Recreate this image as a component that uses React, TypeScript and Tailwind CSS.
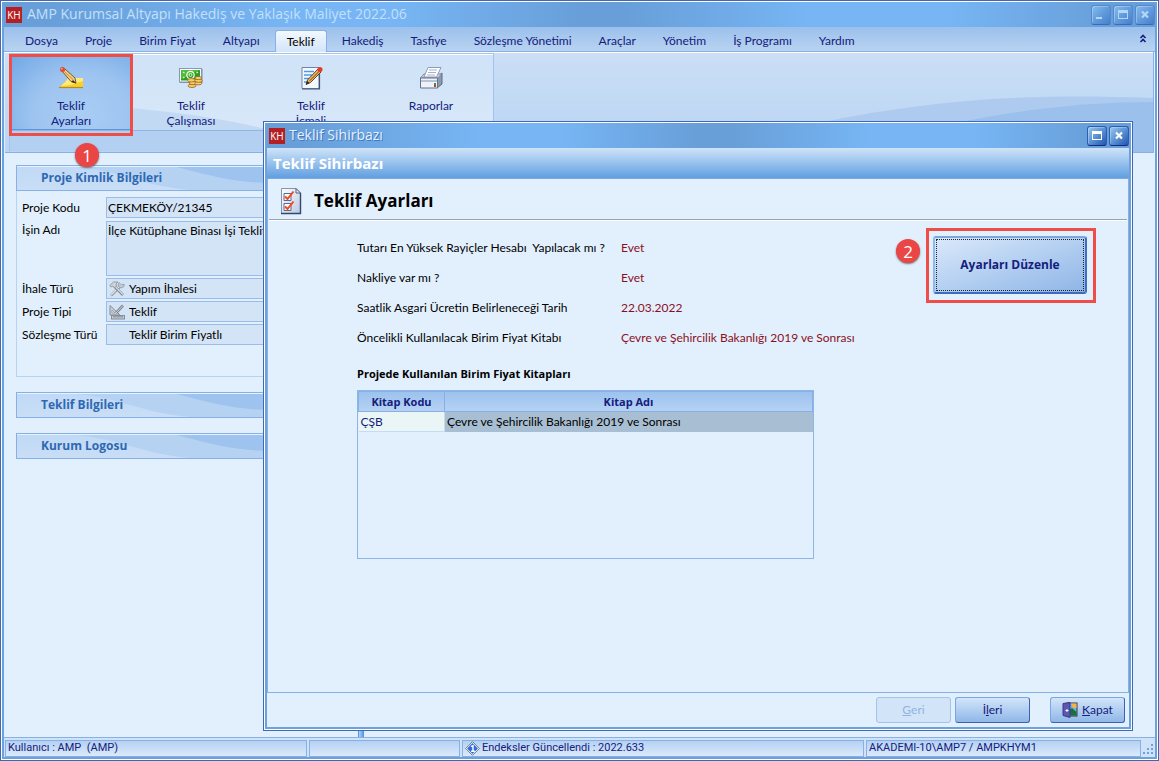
import React from "react";

const menus = ["Dosya", "Proje", "Birim Fiyat", "Altyapı", "Teklif", "Hakediş", "Tasfiye", "Sözleşme Yönetimi", "Araçlar", "Yönetim", "İş Programı", "Yardım"];

const settings = [
  { label: "Tutarı En Yüksek Rayiçler Hesabı  Yapılacak mı ?", value: "Evet" },
  { label: "Nakliye var mı ?", value: "Evet" },
  { label: "Saatlik Asgari Ücretin Belirleneceği Tarih", value: "22.03.2022" },
  { label: "Öncelikli Kullanılacak Birim Fiyat Kitabı", value: "Çevre ve Şehircilik Bakanlığı 2019 ve Sonrası" },
];

function Logo() {
  return (
    <span className="flex h-4 w-4 shrink-0 items-center justify-center bg-[#b51f24] font-['Open_Sans',sans-serif] text-[10px] leading-none text-white">
      KH
    </span>
  );
}

function EditIcon() {
  return (
    <svg width="26" height="24" viewBox="0 0 26 24" aria-hidden="true">
      <path d="M1 22 C4 18 7 17 10 12 H25 V22 Z" fill="#fbd028" />
      <path d="M3 20 C6 17 8 16 10 12 H25 V15 L12 19 Z" fill="#ffea80" />
      <path d="M1 21.500 H25" stroke="#b98a1e" strokeWidth="1.200" />
      <path d="M4 5 L7 3 L17 12 L18 17 L13 15.500 Z" fill="#f6cf85" stroke="#7a5628" strokeWidth="1" />
      <path d="M6.500 5.500 L15.500 14" stroke="#c08a44" strokeWidth="1" />
      <path d="M15 14 L18.500 17.500 L13.500 16 Z" fill="#3b2a1c" />
      <circle cx="4.500" cy="3.500" r="2.500" fill="#e2482d" />
      <circle cx="3.800" cy="2.800" r="0.900" fill="#f9a58c" />
    </svg>
  );
}

function MoneyIcon() {
  return (
    <svg width="24" height="24" viewBox="0 0 24 24" aria-hidden="true">
      <rect x="1" y="3" width="22.500" height="14" fill="#7d8aa3" />
      <rect x="0.500" y="2.500" width="22" height="13.500" fill="#fff" stroke="#8896b4" />
      <rect x="2" y="4" width="19" height="10.500" fill="#2f9c22" />
      <path d="M2 4 H21 L2 13 Z" fill="#4fbd38" />
      <circle cx="11.500" cy="9" r="3.700" fill="none" stroke="#fff" strokeWidth="1.200" />
      <circle cx="11.500" cy="9" r="1.500" fill="none" stroke="#d9f6d1" />
      <path d="M4 6 L5.500 7 M4 12 L5.500 11 M19 6 L17.500 7" stroke="#e2f7dc" strokeWidth="1.300" />
      <g fill="#f8ce69" stroke="#9b6620" strokeWidth="0.800">
        <ellipse cx="13" cy="19.800" rx="4" ry="1.700" />
        <ellipse cx="14" cy="17" rx="4" ry="1.700" />
        <ellipse cx="12.500" cy="14.300" rx="4" ry="1.700" />
        <ellipse cx="19.300" cy="17.200" rx="3.600" ry="1.700" />
        <ellipse cx="19.500" cy="14.600" rx="3.600" ry="1.700" />
        <ellipse cx="19.300" cy="12" rx="3.400" ry="1.600" />
      </g>
    </svg>
  );
}

function NotesIcon() {
  return (
    <svg width="24" height="24" viewBox="0 0 24 24" aria-hidden="true">
      <path d="M3 1.500 H20 V22.500 H3 Z" fill="#f4f8fe" stroke="#7184a3" />
      <path d="M20.500 2 V23 H3" fill="none" stroke="#3e5475" strokeWidth="1.200" />
      <path d="M5 5.500 H15 M5 9 H14 M5 12.500 H11 M5 16 H9" stroke="#4b9be8" strokeWidth="1.300" />
      <path d="M8.500 14 L19 3 L22 6 L11.500 16.500 L7 18.500 Z" fill="#f0be6a" stroke="#5a4024" />
      <path d="M10.500 15 L20 5.500" stroke="#a96c28" strokeWidth="1.300" />
      <path d="M7 18.500 L8.500 15 L10.500 17 Z" fill="#2d2118" />
      <circle cx="21" cy="3.500" r="2.500" fill="#e23b26" />
    </svg>
  );
}

function PrinterIcon() {
  return (
    <svg width="24" height="24" viewBox="0 0 24 24" aria-hidden="true">
      <path d="M18 11 L23 7 V18 L18 22 Z" fill="#8c9ab2" stroke="#5b6984" />
      <path d="M1.500 12 L5 8 H22.500 L19 12 Z" fill="#c9d4e4" stroke="#7f8ca4" />
      <path d="M5 11 L9 1.500 H22 L17.500 11 Z" fill="#fff" stroke="#8f9cb8" />
      <path d="M10 4 H18 M9 6.500 H17 M8 9 H16" stroke="#a3b1cc" />
      <path d="M1.500 12 H18.500 V22 H1.500 Z" fill="#eef3fa" stroke="#65738d" />
      <path d="M2 15 H18" stroke="#8593ac" />
      <rect x="15" y="17" width="2" height="2" fill="#16a43a" />
      <rect x="15" y="19" width="2" height="2" fill="#e03422" />
    </svg>
  );
}

function ChecklistIcon() {
  return (
    <svg width="22" height="28" viewBox="0 0 22 28" aria-hidden="true">
      <defs>
        <linearGradient id="sheet" x1="0" y1="0" x2="1" y2="1">
          <stop offset="0" stopColor="#fff" />
          <stop offset="1" stopColor="#b9c9e2" />
        </linearGradient>
      </defs>
      <path d="M1.500 1.500 H16 L20.500 6 V26.500 H1.500 Z" fill="url(#sheet)" stroke="#8494b2" />
      <path d="M20.500 6 V26.500 H1" fill="none" stroke="#34486e" strokeWidth="1.400" />
      <path d="M16 1.500 V6 H20.500 Z" fill="#e7eefa" stroke="#4c6086" />
      <path d="M4 6.500 H11 V13.500 H4 Z M4 16.500 H11 V23.500 H4 Z" fill="#f7faff" stroke="#566b93" />
      <path d="M5 9.500 L7.500 12 L13.500 4.500 M5 19.500 L7.500 22 L13.500 14.500" fill="none" stroke="#f04a22" strokeWidth="2" />
    </svg>
  );
}

function ToolsIcon() {
  return (
    <svg className="shrink-0" width="16" height="16" viewBox="0 0 16 16" aria-hidden="true">
      <path d="M2 14.500 L11 5.500" stroke="#8d96a2" strokeWidth="2.600" />
      <path d="M2 14 L11 5" stroke="#e3e8ee" strokeWidth="1.200" />
      <path d="M10 1.500 L12.500 4 L15 3 V5.500 L12 7 L9 5 Z" fill="#c6cdd5" stroke="#8d96a2" strokeWidth="0.800" />
      <path d="M5.500 5.500 L14 14" stroke="#7f8994" strokeWidth="2.600" />
      <path d="M6 5.500 L14 13.500" stroke="#d6dce3" strokeWidth="1.100" />
      <path d="M0.800 4.500 L4.500 1 H9 L7 3 L7.500 5 L5.500 7 L4 5 L2 6 Z" fill="#ced5dd" stroke="#8d96a2" strokeWidth="0.900" />
    </svg>
  );
}

function RulerIcon() {
  return (
    <svg className="shrink-0" width="16" height="16" viewBox="0 0 16 16" aria-hidden="true">
      <path d="M1 1.500 L11 11 H1 Z" fill="#c9d0d8" stroke="#858e99" />
      <path d="M3 6 L6 9 H3 Z" fill="#f3f6fa" stroke="#858e99" strokeWidth="0.700" />
      <path d="M7 9 L14 1.500" stroke="#7b8590" strokeWidth="2.600" />
      <path d="M7 9 L14 1.500" stroke="#d9dfe6" strokeWidth="0.900" />
      <rect x="2.500" y="11.500" width="13" height="3.500" fill="#c3cad3" stroke="#858e99" />
      <path d="M5 12 V13.500 M7 12 V13.500 M9 12 V13.500 M11 12 V13.500 M13 12 V13.500" stroke="#6e7884" />
    </svg>
  );
}

function DoorIcon() {
  return (
    <svg width="16" height="16" viewBox="0 0 16 16" aria-hidden="true">
      <rect x="5" y="1" width="10" height="13" fill="#6cb1f0" stroke="#34373f" />
      <path d="M9 1.500 H14.500 V6 H11 Z" fill="#fbb040" />
      <path d="M6 9 L10 6 L14.500 10 V13.500 H6 Z" fill="#1e6e35" />
      <path d="M1 1.500 L8 0.500 V15.500 L1 13.500 Z" fill="#5b57b5" stroke="#3c3888" />
      <path d="M5 7 V10 M3.500 8.500 H6.500" stroke="#fff" />
    </svg>
  );
}

function InfoIcon() {
  return (
    <svg className="shrink-0" width="15" height="15" viewBox="0 0 16 16" aria-hidden="true">
      <path d="M8 0.700 L15.300 8 L8 15.300 L0.700 8 Z" fill="#fff" stroke="#5f6f8e" />
      <path d="M8 2.200 L13.800 8 L8 13.800 L2.200 8 Z" fill="#2f6ed6" />
      <path d="M6.500 6 L8.500 5 V11 M6.500 11 H10.500" fill="none" stroke="#fff" strokeWidth="1.500" />
    </svg>
  );
}

function CaptionButton({ kind, active }: { kind: "min" | "max" | "close"; active?: boolean }) {
  const names = { min: "Simge durumuna küçült", max: "Ekranı kapla", close: "Pencereyi kapat" };
  const skin = active
    ? "from-[#9ac6ee] via-[#5b92d4] to-[#2554ad] border-[#2b5fb4] border-b-[#0f2c85]"
    : "from-[#86bbe9] via-[#629cdd] to-[#467fcb] border-[#5289d0] border-b-[#396bba]";
  return (
    <button
      type="button"
      aria-label={names[kind]}
      className={"flex h-5 w-5 items-center justify-center rounded-[3px] border bg-linear-to-br shadow-[inset_1px_1px_0_rgba(255,255,255,0.25)] " + skin}
    >
      <svg width="10" height="10" viewBox="0 0 10 10" className={active ? "text-white" : "text-[#b4d7f7]"} aria-hidden="true">
        {kind === "min" && <path d="M0 8 H6" stroke="currentColor" strokeWidth="2" />}
        {kind === "max" && (
          <>
            <rect x="0.500" y="0.500" width="9" height="8" fill="none" stroke="currentColor" />
            <path d="M0 1.500 H10" stroke="currentColor" strokeWidth="3" />
          </>
        )}
        {kind === "close" && <path d="M2 1.500 L8 7.500 M8 1.500 L2 7.500" stroke="currentColor" strokeWidth="2.200" />}
      </svg>
    </button>
  );
}

function Badge({ children, className }: { children: React.ReactNode; className: string }) {
  return (
    <span className={"absolute flex h-6 w-6 items-center justify-center rounded-full bg-[#ea4646] font-['Open_Sans',sans-serif] text-[17px] leading-none text-white shadow-[0_1px_2px_rgba(60,60,60,0.7)] " + className}>
      {children}
    </span>
  );
}

function RibbonButton({ icon, lines, active }: { icon: React.ReactNode; lines: string[]; active?: boolean }) {
  return (
    <button
      type="button"
      className={
        "flex w-[120px] flex-col items-center pt-2.5 leading-[15px] " +
        (active ? "border-y border-[#5f95dc] bg-radial-[at_60%_80%] from-[#a9cdf4] via-[#9dc4f0] to-[#70a7e6]" : "border-y border-transparent")
      }
    >
      <span className="mb-2 flex h-6 items-center">{icon}</span>
      {lines.map((line) => (
        <span key={line}>{line}</span>
      ))}
    </button>
  );
}

function SectionHeader({ children }: { children: React.ReactNode }) {
  return (
    <h2 className="relative flex h-[26px] items-center overflow-hidden border border-[#87b0e6] bg-linear-to-b from-[#c0d9f5] to-[#c9def6] pl-6 font-['Open_Sans',sans-serif] text-xs font-bold text-[#2f68b2] shadow-[inset_0_1px_0_#e6f2fd]">
      <svg className="absolute inset-0 h-full w-full" viewBox="0 0 340 24" preserveAspectRatio="none" aria-hidden="true">
        <path d="M60 1 C110 6 125 20 175 24 H340 V1 Z" fill="#b5d2f2" />
        <path d="M160 1 C190 8 215 17 260 17 H340 V1 Z" fill="#9dc3ee" />
      </svg>
      <span className="relative">{children}</span>
    </h2>
  );
}

function PickField({ id, label, value, icon }: { id: string; label: string; value: string; icon?: React.ReactNode }) {
  return (
    <>
      <label htmlFor={id} className="self-center">{label}</label>
      <div className="flex h-[21px] items-center gap-1 border border-[#99bce9] bg-[#d3e4f6] pl-0.5">
        <span className="flex w-4">{icon}</span>
        <input id={id} readOnly defaultValue={value} className="min-w-0 flex-1 bg-transparent outline-none" />
      </div>
    </>
  );
}

function FooterButton({ children, disabled }: { children: React.ReactNode; disabled?: boolean }) {
  return (
    <button
      type="button"
      disabled={disabled}
      className={
        "flex h-[26px] w-[75px] items-center justify-center gap-1 rounded-[3px] border " +
        (disabled
          ? "border-[#a3c3e8] bg-[#d1e4f8] text-[#92b3e3]"
          : "border-[#7ba6df] border-r-[#3f62b0] border-b-[#3f62b0] bg-linear-to-b from-[#d3e5f9] to-[#8fb7e8] text-[#14207c]")
      }
    >
      {children}
    </button>
  );
}

const titleGradient =
  "bg-[linear-gradient(90deg,#689fd9_0%,#689fd9_4%,#77b5f4_25%,#77b5f4_34%,#689fd9_50%,#689fd9_54%,#77b5f4_70%,#77b5f4_82%,#689fd9_96%,#689fd9_100%)]";

function Wizard() {
  return (
    <section
      role="dialog"
      aria-labelledby="wizard-title"
      className="absolute top-[120px] right-[25px] bottom-[29px] left-[262px] z-20 flex flex-col border border-[#4068b4] bg-white p-px"
    >
      <div className="flex min-h-0 flex-1 flex-col border-x-2 border-b-2 border-[#6ba1dc] bg-[#e2f0fe]">
        <header className={"flex h-[25px] shrink-0 items-center gap-1 pl-0.5 " + titleGradient}>
          <Logo />
          <h2 id="wizard-title" className="flex-1 pb-px font-['Open_Sans',sans-serif] text-sm text-[#e4f1ff] [text-shadow:1px_1px_0_#4477bd]">Teklif Sihirbazı</h2>
          <div className="flex gap-0.5">
            <CaptionButton kind="max" active />
            <CaptionButton kind="close" active />
          </div>
        </header>
        <div className="flex h-[31px] shrink-0 items-center border-b border-[#7fabe2] bg-linear-to-b from-[#cfe3f8] to-[#5f9fe0] pl-1.5 font-['Open_Sans',sans-serif] text-[15px] font-bold text-white">
          Teklif Sihirbazı
        </div>
        <div className="flex min-h-0 flex-1 flex-col border-x border-b border-[#87b0e6]">
          <div className="mx-px flex h-[41px] shrink-0 items-center gap-3 border-b border-[#9aa3ab] pt-1 pl-[11px] shadow-[0_1px_0_#ffffff]">
            <ChecklistIcon />
            <h1 className="font-['Open_Sans',sans-serif] text-[17px] font-bold text-black">Teklif Ayarları</h1>
          </div>
          <div className="flex justify-between pr-8 pl-[89px]">
            <div className="pt-[13px]">
              <dl className="grid grid-cols-[264px_auto] auto-rows-[30px] items-center">
                {settings.map((row) => (
                  <React.Fragment key={row.label}>
                    <dt className="whitespace-pre">{row.label}</dt>
                    <dd className="whitespace-nowrap text-[#8b0f22]">{row.value}</dd>
                  </React.Fragment>
                ))}
              </dl>
              <h3 className="mt-3 font-['Open_Sans',sans-serif] text-[11px] leading-[18px] font-bold text-black">Projede Kullanılan Birim Fiyat Kitapları</h3>
              <div className="mt-[7px] h-[169px] w-[457px] border border-[#8fb5e6]">
                <table className="w-full table-fixed border-collapse leading-[18px]">
                  <thead>
                    <tr className="h-5 bg-linear-to-b from-[#9cc2ee] to-[#b7d3f3] font-['Open_Sans',sans-serif] text-[11px] text-[#14207c]">
                      <th className="w-[86px] border border-[#87b0e6] p-0 font-bold">Kitap Kodu</th>
                      <th className="border border-[#87b0e6] p-0 font-bold">Kitap Adı</th>
                    </tr>
                  </thead>
                  <tbody>
                    <tr className="h-5">
                      <td className="border-r border-b border-[#c6dcf2] bg-[#eaf6f5] p-0 pl-0.5 text-[#14207c]">ÇŞB</td>
                      <td className="bg-[#a8bed2] p-0 pl-0.5">Çevre ve Şehircilik Bakanlığı 2019 ve Sonrası</td>
                    </tr>
                  </tbody>
                </table>
              </div>
            </div>
            <div className="relative mt-2 flex h-[75px] w-[170px] shrink-0 items-start border-[3px] border-[#ee4d48] pt-[5px] pl-1">
              <Badge className="top-2 -left-[33px]">2</Badge>
              <button
                type="button"
                className="flex h-[58px] w-[154px] rounded-[3px] border-2 border-t-[#7ba6df] border-l-[#8fb8ec] border-r-[#3f6fc4] border-b-[#3a6cc4] bg-linear-to-br from-[#dbe9fa] via-[#b3cff1] to-[#8fb5e6] p-px"
              >
                <span className="flex h-full w-full items-center justify-center border border-dotted border-[#222222] font-['Open_Sans',sans-serif] text-xs font-bold text-[#14207c]">
                  Ayarları Düzenle
                </span>
              </button>
            </div>
          </div>
        </div>
        <footer className="flex h-[34px] shrink-0 items-center justify-end gap-1 pr-1">
          <FooterButton disabled><span><u>G</u>eri</span></FooterButton>
          <FooterButton><span>İ<u>l</u>eri</span></FooterButton>
          <div className="ml-4">
            <FooterButton>
              <DoorIcon />
              <span><u>K</u>apat</span>
            </FooterButton>
          </div>
        </footer>
      </div>
    </section>
  );
}

const statusCell = "flex items-center gap-0.5 border border-[#87b0e6] bg-linear-to-b from-[#b4d1f3] to-[#dceafb] pl-0.5";

export default function App() {
  return (
    <div className="relative flex h-screen flex-col border border-[#4068b4] bg-white p-px font-[Lato,'Open_Sans',sans-serif] text-xs text-black">
      <div className="flex min-h-0 flex-1 flex-col border-x-2 border-b-2 border-[#6ba1dc] bg-[#e2f0fe]">
        <header className={"flex h-[25px] shrink-0 items-center gap-0.5 pl-0.5 " + titleGradient}>
          <Logo />
          <h1 className="ml-[3px] flex-1 pb-px font-['Open_Sans',sans-serif] text-sm text-[#c3e0fb]">AMP Kurumsal Altyapı Hakediş ve Yaklaşık Maliyet 2022.06</h1>
          <CaptionButton kind="min" />
          <CaptionButton kind="max" />
          <CaptionButton kind="close" />
        </header>

        <nav className="flex h-[25px] shrink-0 items-end justify-between border-b border-[#87b0e6] bg-linear-to-b from-[#9bc0ec] to-[#b9d3f1] pr-2 pl-[9px] text-[#14207c]">
          <div className="flex gap-[3px]">
            {menus.map((item) => (
              <button
                key={item}
                type="button"
                className={
                  item === "Teklif"
                    ? "-mb-px h-[22px] rounded-t-[3px] border border-b-0 border-[#87b0e6] bg-linear-to-b from-[#f2f8fe] to-[#d3e5f9] px-[11px] text-black"
                    : "h-[21px] px-3"
                }
              >
                {item}
              </button>
            ))}
          </div>
          <button type="button" aria-label="Şeridi daralt" className="mb-2">
            <svg width="8" height="9" viewBox="0 0 8 9" aria-hidden="true">
              <path d="M1.500 4 L4 1.500 L6.500 4 M1.500 8 L4 5.500 L6.500 8" fill="none" stroke="#14207c" strokeWidth="1.600" />
            </svg>
          </button>
        </nav>

        <div className="relative z-10 mx-px h-[101px] shrink-0 border-r border-b border-[#87b0e6] bg-linear-to-b from-[#cbdff6] to-[#b9d4f3] pt-px shadow-[inset_0_1px_0_#ffffff]">
          <svg className="absolute inset-x-0 top-px bottom-0 h-[99px] w-full" viewBox="0 0 1149 99" preserveAspectRatio="none" aria-hidden="true">
            <path d="M690 99 C860 55 970 38 1149 45 V99 Z" fill="#aecbef" />
            <path d="M830 99 C960 64 1050 49 1149 49 V99 Z" fill="#9cc0ec" />
          </svg>
          <div className="relative ml-1 flex h-[98px] w-[485px] flex-col border-x border-t border-[#a4c3ec] bg-[#b3d0f2]">
            <div className="relative flex h-[77px] shrink-0 border-t border-b border-t-white border-b-[#8fb5e6] bg-linear-to-b from-[#cfe2f7] to-[#d8e8f9] text-[#14207c]">
              <svg className="absolute inset-0 h-full w-full" viewBox="0 0 484 76" preserveAspectRatio="none" aria-hidden="true">
                <path d="M0 50 C90 48 190 58 260 76 H0 Z" fill="#c2d9f4" />
              </svg>
              <div className="relative flex pl-px">
                <RibbonButton active icon={<EditIcon />} lines={["Teklif", "Ayarları"]} />
                <RibbonButton icon={<MoneyIcon />} lines={["Teklif", "Çalışması"]} />
                <RibbonButton icon={<NotesIcon />} lines={["Teklif", "İcmali"]} />
                <RibbonButton icon={<PrinterIcon />} lines={["Raporlar"]} />
              </div>
              <div className="pointer-events-none absolute -top-px -left-px h-[82px] w-[124px] border-[3px] border-[#ee4d48]" />
            </div>
          </div>
          <Badge className="top-[91px] left-[70px]">1</Badge>
        </div>

        <main className="flex min-h-0 flex-1">
          <div className="flex w-[352px] shrink-0 flex-col gap-[15px] pt-3 pl-3">
            <section>
              <SectionHeader>Proje Kimlik Bilgileri</SectionHeader>
              <div className="h-[186px] border-x border-b border-[#b5d3f5] pt-1.5 pl-[5px]">
                <div className="grid grid-cols-[84px_1fr] gap-y-0.5">
                  <label htmlFor="kod" className="self-center">Proje Kodu</label>
                  <input id="kod" readOnly defaultValue="ÇEKMEKÖY/21345" className="h-[21px] min-w-0 border border-[#99bce9] bg-[#d3e4f6] px-px outline-none" />
                  <label htmlFor="isin-adi" className="pt-0.5">İşin Adı</label>
                  <textarea id="isin-adi" readOnly defaultValue="İlçe Kütüphane Binası İşi Teklif" className="mt-px h-[55px] min-w-0 resize-none border border-[#99bce9] bg-[#d3e4f6] px-px pt-px outline-none" />
                  <PickField id="ihale" label="İhale Türü" value="Yapım İhalesi" icon={<ToolsIcon />} />
                  <PickField id="tip" label="Proje Tipi" value="Teklif" icon={<RulerIcon />} />
                  <PickField id="sozlesme" label="Sözleşme Türü" value="Teklif Birim Fiyatlı" />
                </div>
              </div>
            </section>
            <SectionHeader>Teklif Bilgileri</SectionHeader>
            <SectionHeader>Kurum Logosu</SectionHeader>
          </div>
          <div className="ml-0.5 w-1.5 border-x border-[#5a93d8] bg-linear-to-r from-[#a9d3fb] to-[#5d9fea]" />
        </main>

        <footer className="flex h-5 shrink-0 gap-0.5 border-t border-[#87b0e6] bg-[#cfe2f8] pt-0.5 pl-px font-[Roboto,sans-serif] text-[11px] whitespace-pre text-[#14207c]">
          <div className={statusCell + " w-[302px]"}>Kullanıcı : AMP  (AMP)</div>
          <div className={statusCell + " w-[151px]"} />
          <div className={statusCell + " flex-1"}>
            <InfoIcon />
            Endeksler Güncellendi : 2022.633
          </div>
          <div className={statusCell + " w-[275px]"}>AKADEMI-10\AMP7 / AMPKHYM1</div>
          <svg className="mt-1 mr-px shrink-0" width="11" height="11" viewBox="0 0 11 11" aria-hidden="true">
            <path d="M8 0 h2 v2 h-2 Z M4 4 h2 v2 h-2 Z M8 4 h2 v2 h-2 Z M0 8 h2 v2 h-2 Z M4 8 h2 v2 h-2 Z M8 8 h2 v2 h-2 Z" fill="#6fa0e0" />
          </svg>
        </footer>
      </div>
      <Wizard />
    </div>
  );
}
